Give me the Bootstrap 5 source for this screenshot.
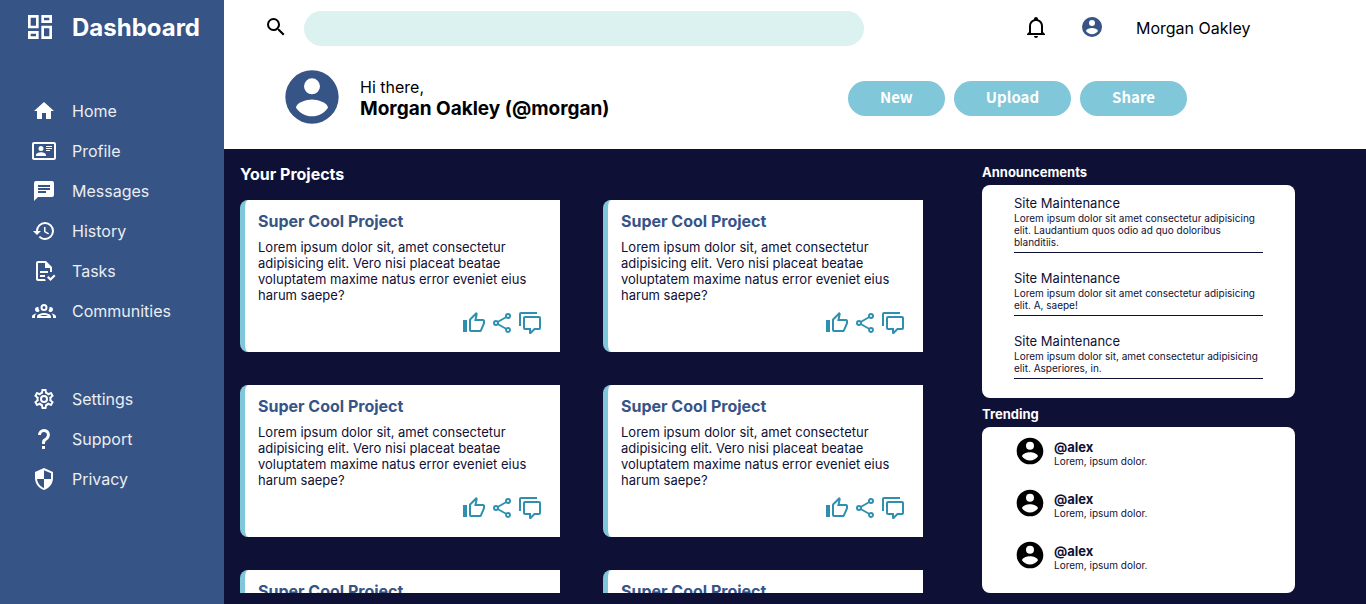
<!DOCTYPE html>
<html lang="en">
<head>
<meta charset="utf-8">
<meta name="viewport" content="width=device-width, initial-scale=1">
<title>Dashboard</title>
<link href="https://cdn.jsdelivr.net/npm/bootstrap@5.3.0/dist/css/bootstrap.min.css" rel="stylesheet">
<style>
:root { --ink:#0f1035; --blue:#365486; --sky:#7fc7d9; --mint:#dcf2f1; --teal:#2e8fae; }
body { font-family: Inter, "Liberation Sans", sans-serif; font-size:16px; line-height:20px; color:#000; background:var(--ink); }
h1,h2,h3,p,ul { margin:0; }
svg { fill:currentColor; display:block; flex:none; }
.i24 { width:24px; height:24px; }
.i32 { width:32px; height:32px; }
.i64 { width:64px; height:64px; }
.sidebar { flex:0 0 224px; background:var(--blue); color:#fff; }
.brand { gap:16px; padding:10px 0 55px 24px; }
.brand h1 { font-size:24px; font-weight:700; line-height:32px; padding-top:2px; }
.side-nav { gap:16px; padding-left:32px; }
.side-nav a { display:flex; gap:16px; height:24px; align-items:center; color:#fff; text-decoration:none; }
.side-nav span { opacity:.9; }
.topbar { padding:11px 0 0 40px; }
.search-box { flex:0 1 560px; height:35px; margin-left:16px; border:0; border-radius:18px; background:var(--mint); padding:0 16px; }
.account { width:342px; gap:32px; line-height:26px; }
.welcome { padding:19px 179px 20px 56px; }
.greeting { padding-top:4px; }
.actions { padding-top:2px; gap:9px; }
.avatar { color:var(--blue); }
.full-name { font-size:19px; font-weight:700; line-height:24px; }
.pill-btn { height:35px; border:0; border-radius:18px; padding:0 32px 2px; background:var(--sky); color:#fff; font-family:"Noto Sans CJK SC", sans-serif; font-size:15px; font-weight:700; }
.board { padding:15px 71px 11px 16px; gap:16px; color:var(--ink); }
.section-title { font-size:16px; font-weight:700; line-height:20px; color:#fff; }
.project-grid { display:grid; grid-template-columns:1fr 1fr; row-gap:33px; margin-top:16px; }
.project { max-width:320px; background:#fff; border-left:5px solid var(--sky); border-radius:8px 0 0 8px; padding:11px 18px 17px 13px; }
.project h3 { font-size:16px; font-weight:700; line-height:20px; color:var(--blue); }
.project p { font-size:13px; line-height:16px; margin:8px 0; }
.icon-btn { border:0; background:none; padding:0; color:var(--teal); }
.side-info { flex:0 0 313px; }
.side-info h2 { font-size:13px; font-weight:700; line-height:17px; color:#fff; }
.panel { background:#fff; border-radius:8px; padding:8px 32px 2px; }
.notice { border-bottom:1px solid var(--ink); padding:2px 0 4px; margin-bottom:15px; }
.notice h3, .trend h3 { font-size:13px; line-height:17px; font-weight:400; }
.notice p, .trend p { font-size:10px; line-height:12px; }
.trend { gap:8px; height:52px; }
.trend h3 { font-weight:700; line-height:16px; }
</style>
</head>
<body>
<svg class="d-none" xmlns="http://www.w3.org/2000/svg">
<symbol id="user" viewBox="0 0 24 24"><path d="M12,19.2C9.5,19.2 7.29,17.92 6,16C6.03,14 10,12.9 12,12.9C14,12.9 17.97,14 18,16C16.71,17.92 14.5,19.2 12,19.2M12,5A3,3 0 0,1 15,8A3,3 0 0,1 12,11A3,3 0 0,1 9,8A3,3 0 0,1 12,5M12,2A10,10 0 0,0 2,12A10,10 0 0,0 12,22A10,10 0 0,0 22,12C22,6.47 17.5,2 12,2Z"/></symbol>
<symbol id="like" viewBox="0 0 24 24"><path d="M5,9V21H1V9H5M9,21A2,2 0 0,1 7,19V9C7,8.45 7.22,7.95 7.59,7.59L14.17,1L15.23,2.06C15.5,2.33 15.67,2.7 15.67,3.11L15.64,3.43L14.69,8H21C22.11,8 23,8.9 23,10V12C23,12.26 22.95,12.5 22.86,12.73L19.84,19.78C19.54,20.5 18.83,21 18,21H9M9,19H18.03L21,12V10H12.21L13.34,4.68L9,9.03V19Z"/></symbol>
<symbol id="share" viewBox="0 0 24 24"><path d="M18,16.08C17.24,16.08 16.56,16.38 16.04,16.85L8.91,12.7C8.96,12.47 9,12.24 9,12C9,11.76 8.96,11.53 8.91,11.3L15.96,7.19C16.5,7.69 17.21,8 18,8A3,3 0 0,0 21,5A3,3 0 0,0 18,2A3,3 0 0,0 15,5C15,5.24 15.04,5.47 15.09,5.7L8.04,9.81C7.5,9.31 6.79,9 6,9A3,3 0 0,0 3,12A3,3 0 0,0 6,15C6.79,15 7.5,14.69 8.04,14.19L15.16,18.34C15.11,18.55 15.08,18.77 15.08,19C15.08,20.61 16.39,21.91 18,21.91C19.61,21.91 20.92,20.61 20.92,19A2.92,2.92 0 0,0 18,16.08M18,4A1,1 0 0,1 19,5A1,1 0 0,1 18,6A1,1 0 0,1 17,5A1,1 0 0,1 18,4M6,13A1,1 0 0,1 5,12A1,1 0 0,1 6,11A1,1 0 0,1 7,12A1,1 0 0,1 6,13M18,20A1,1 0 0,1 17,19A1,1 0 0,1 18,18A1,1 0 0,1 19,19A1,1 0 0,1 18,20Z"/></symbol>
<symbol id="comments" viewBox="0 0 24 24"><path d="M12,23A1,1 0 0,1 11,22V19H7A2,2 0 0,1 5,17V7A2,2 0 0,1 7,5H21A2,2 0 0,1 23,7V17A2,2 0 0,1 21,19H16.9L13.2,22.71C13,22.89 12.76,23 12.5,23H12M13,17V20.08L16.08,17H21V7H7V17H13M3,15H1V3A2,2 0 0,1 3,1H19V3H3V15Z"/></symbol>
</svg>
<div class="d-flex vh-100 overflow-hidden">
<aside class="sidebar">
  <div class="brand d-flex align-items-center">
    <svg class="i32" viewBox="0 0 24 24"><path d="M19,5V7H15V5H19M9,5V11H5V5H9M19,13V19H15V13H19M9,17V19H5V17H9M21,3H13V9H21V3M11,3H3V13H11V3M21,11H13V21H21V11M11,15H3V21H11V15Z"/></svg>
    <h1>Dashboard</h1>
  </div>
  <nav class="side-nav d-flex flex-column" aria-label="Main">
    <a href="#"><svg class="i24" viewBox="0 0 24 24"><path d="M10,20V14H14V20H19V12H22L12,3L2,12H5V20H10Z"/></svg><span>Home</span></a>
    <a href="#"><svg class="i24" viewBox="0 0 24 24"><path d="M22,3H2C0.91,3.04 0.04,3.91 0,5V19C0.04,20.09 0.91,20.96 2,21H22C23.09,20.96 23.96,20.09 24,19V5C23.96,3.91 23.09,3.04 22,3M22,19H2V5H22V19M14,17V15.75C14,14.09 10.66,13.25 9,13.25C7.34,13.25 4,14.09 4,15.75V17H14M9,7A2.5,2.5 0 0,0 6.5,9.5A2.5,2.5 0 0,0 9,12A2.5,2.5 0 0,0 11.5,9.5A2.5,2.5 0 0,0 9,7M14,7V8H20V7H14M14,9V10H20V9H14M14,11V12H18V11H14"/></svg><span>Profile</span></a>
    <a href="#"><svg class="i24" viewBox="0 0 24 24"><path d="M20,2H4A2,2 0 0,0 2,4V22L6,18H20A2,2 0 0,0 22,16V4A2,2 0 0,0 20,2M6,9H18V11H6M14,14H6V12H14M18,8H6V6H18"/></svg><span>Messages</span></a>
    <a href="#"><svg class="i24" viewBox="0 0 24 24"><path d="M13.5,8H12V13L16.28,15.54L17,14.33L13.5,12.25V8M13,3A9,9 0 0,0 4,12H1L4.96,16.03L9,12H6A7,7 0 0,1 13,5A7,7 0 0,1 20,12A7,7 0 0,1 13,19C11.07,19 9.32,18.21 8.06,16.94L6.64,18.36C8.27,20 10.5,21 13,21A9,9 0 0,0 22,12A9,9 0 0,0 13,3"/></svg><span>History</span></a>
    <a href="#"><svg class="i24" viewBox="0 0 24 24"><path d="M23.5,17L18.5,22L15,18.5L16.5,17L18.5,19L22,15.5L23.5,17M6,2C4.89,2 4,2.9 4,4V20C4,21.11 4.89,22 6,22H13.81C13.45,21.38 13.2,20.7 13.08,20H6V4H13V9H18V13.08C18.33,13.03 18.67,13 19,13C19.34,13 19.67,13.03 20,13.08V8L14,2M8,12V14H16V12M8,16V18H13V16Z"/></svg><span>Tasks</span></a>
    <a href="#"><svg class="i24" viewBox="0 0 24 24"><path d="M12,5A3.5,3.5 0 0,0 8.5,8.5A3.5,3.5 0 0,0 12,12A3.5,3.5 0 0,0 15.5,8.5A3.5,3.5 0 0,0 12,5M12,7A1.5,1.5 0 0,1 13.5,8.5A1.5,1.5 0 0,1 12,10A1.5,1.5 0 0,1 10.5,8.5A1.5,1.5 0 0,1 12,7M5.5,8A2.5,2.5 0 0,0 3,10.5C3,11.44 3.53,12.25 4.29,12.68C4.65,12.88 5.06,13 5.5,13C5.94,13 6.35,12.88 6.71,12.68C7.08,12.47 7.39,12.17 7.62,11.81C6.89,10.86 6.5,9.7 6.5,8.5C6.5,8.41 6.5,8.31 6.5,8.22C6.2,8.08 5.86,8 5.5,8M18.5,8C18.14,8 17.8,8.08 17.5,8.22C17.5,8.31 17.5,8.41 17.5,8.5C17.5,9.7 17.11,10.86 16.38,11.81C16.5,12 16.63,12.15 16.78,12.3C16.94,12.45 17.1,12.58 17.29,12.68C17.65,12.88 18.06,13 18.5,13C18.94,13 19.35,12.88 19.71,12.68C20.47,12.25 21,11.44 21,10.5A2.5,2.5 0 0,0 18.5,8M12,14C9.66,14 5,15.17 5,17.5V19H19V17.5C19,15.17 14.34,14 12,14M4.71,14.55C2.78,14.78 0,15.76 0,17.5V19H3V17.07C3,16.06 3.69,15.22 4.71,14.55M19.29,14.55C20.31,15.22 21,16.06 21,17.07V19H24V17.5C24,15.76 21.22,14.78 19.29,14.55M12,16C13.53,16 15.24,16.5 16.23,17H7.77C8.76,16.5 10.47,16 12,16Z"/></svg><span>Communities</span></a>
  </nav>
  <nav class="side-nav d-flex flex-column mt-5 pt-3" aria-label="Preferences">
    <a href="#"><svg class="i24" viewBox="0 0 24 24"><path d="M12,8A4,4 0 0,1 16,12A4,4 0 0,1 12,16A4,4 0 0,1 8,12A4,4 0 0,1 12,8M12,10A2,2 0 0,0 10,12A2,2 0 0,0 12,14A2,2 0 0,0 14,12A2,2 0 0,0 12,10M10,22C9.75,22 9.54,21.82 9.5,21.58L9.13,18.93C8.5,18.68 7.96,18.34 7.44,17.94L4.95,18.95C4.73,19.03 4.46,18.95 4.34,18.73L2.34,15.27C2.21,15.05 2.27,14.78 2.46,14.63L4.57,12.97L4.5,12L4.57,11L2.46,9.37C2.27,9.22 2.21,8.95 2.34,8.73L4.34,5.27C4.46,5.05 4.73,4.96 4.95,5.05L7.44,6.05C7.96,5.66 8.5,5.32 9.13,5.07L9.5,2.42C9.54,2.18 9.75,2 10,2H14C14.25,2 14.46,2.18 14.5,2.42L14.87,5.07C15.5,5.32 16.04,5.66 16.56,6.05L19.05,5.05C19.27,4.96 19.54,5.05 19.66,5.27L21.66,8.73C21.79,8.95 21.73,9.22 21.54,9.37L19.43,11L19.5,12L19.43,13L21.54,14.63C21.73,14.78 21.79,15.05 21.66,15.27L19.66,18.73C19.54,18.95 19.27,19.04 19.05,18.95L16.56,17.95C16.04,18.34 15.5,18.68 14.87,18.93L14.5,21.58C14.46,21.82 14.25,22 14,22H10M11.25,4L10.88,6.61C9.68,6.86 8.62,7.5 7.85,8.39L5.44,7.35L4.69,8.65L6.8,10.2C6.4,11.37 6.4,12.64 6.8,13.8L4.68,15.36L5.43,16.66L7.86,15.62C8.63,16.5 9.68,17.14 10.87,17.38L11.24,20H12.76L13.13,17.39C14.32,17.14 15.37,16.5 16.14,15.62L18.57,16.66L19.32,15.36L17.2,13.81C17.6,12.64 17.6,11.37 17.2,10.2L19.31,8.65L18.56,7.35L16.15,8.39C15.38,7.5 14.32,6.86 13.12,6.62L12.75,4H11.25Z"/></svg><span>Settings</span></a>
    <a href="#"><svg class="i24" viewBox="0 0 24 24"><path d="M10,19H13V22H10V19M12,2C17.35,2.22 19.68,7.62 16.5,11.67C15.67,12.67 14.33,13.33 13.67,14.17C13,15 13,16 13,17H10C10,15.33 10,13.92 10.67,12.92C11.33,11.92 12.67,11.33 13.5,10.67C15.92,8.43 15.32,5.26 12,5A3,3 0 0,0 9,8H6A6,6 0 0,1 12,2Z"/></svg><span>Support</span></a>
    <a href="#"><svg class="i24" viewBox="0 0 24 24"><path fill-rule="evenodd" d="M12,1L3,5V11C3,16.55 6.84,21.73 12,23C17.16,21.73 21,16.55 21,11V5L12,1M12,3.19V12H19V6.3L12,3.19M12,12H5C5.53,16.11 8.28,19.78 12,20.92V12Z"/></svg><span>Privacy</span></a>
  </nav>
</aside>
<div class="d-flex flex-column flex-grow-1">
  <header class="bg-white">
    <div class="topbar d-flex justify-content-between">
      <form class="d-flex flex-grow-1" role="search">
        <label for="q" class="pt-1"><svg class="i24" role="img" aria-label="Search" viewBox="0 0 24 24"><path d="M9.5,3A6.5,6.5 0 0,1 16,9.5C16,11.11 15.41,12.59 14.44,13.73L14.71,14H15.5L20.5,19L19,20.5L14,15.5V14.71L13.73,14.44C12.59,15.41 11.11,16 9.5,16A6.5,6.5 0 0,1 3,9.5A6.5,6.5 0 0,1 9.5,3M9.5,5C7,5 5,7 5,9.5C5,12 7,14 9.5,14C12,14 14,12 14,9.5C14,7 12,5 9.5,5Z"/></svg></label>
        <input id="q" class="search-box" type="search">
      </form>
      <div class="account d-flex pt-1">
        <button class="icon-btn text-black i24" type="button" aria-label="Notifications"><svg class="i24" viewBox="0 0 24 24"><path d="M10,21H14C14,22.1 13.1,23 12,23S10,22.1 10,21M21,19V20H3V19L5,17V11C5,7.9 7,5.2 10,4.3V4C10,2.9 10.9,2 12,2S14,2.9 14,4V4.3C17,5.2 19,7.9 19,11V17L21,19M17,11C17,8.2 14.8,6 12,6S7,8.2 7,11V18H17V11Z"/></svg></button>
        <svg class="i24 avatar"><use href="#user"/></svg>
        <span>Morgan Oakley</span>
      </div>
    </div>
    <div class="welcome d-flex align-items-center justify-content-between">
      <div class="d-flex align-items-center gap-3">
        <svg class="i64 avatar"><use href="#user"/></svg>
        <div class="greeting">Hi there,<div class="full-name">Morgan Oakley (@morgan)</div></div>
      </div>
      <div class="actions d-flex">
        <button class="pill-btn" type="button">New</button>
        <button class="pill-btn" type="button">Upload</button>
        <button class="pill-btn" type="button">Share</button>
      </div>
    </div>
  </header>
  <main class="board d-flex flex-grow-1 overflow-hidden">
    <section class="flex-grow-1 overflow-hidden">
      <h2 class="section-title">Your Projects</h2>
      <div class="project-grid" id="projects">
        <article class="project">
          <h3>Super Cool Project</h3>
          <p>Lorem ipsum dolor sit, amet consectetur adipisicing elit. Vero nisi placeat beatae voluptatem maxime natus error eveniet eius harum saepe?</p>
          <div class="d-flex justify-content-end gap-1">
            <button class="icon-btn" type="button" aria-label="Like"><svg class="i24"><use href="#like"/></svg></button>
            <button class="icon-btn" type="button" aria-label="Share"><svg class="i24"><use href="#share"/></svg></button>
            <button class="icon-btn" type="button" aria-label="Comments"><svg class="i24"><use href="#comments"/></svg></button>
          </div>
        </article>
      </div>
    </section>
    <aside class="side-info">
      <h2>Announcements</h2>
      <div class="panel mt-1 mb-2 pb-1">
        <div class="notice"><h3>Site Maintenance</h3><p>Lorem ipsum dolor sit amet consectetur adipisicing elit. Laudantium quos odio ad quo doloribus blanditiis.</p></div>
        <div class="notice"><h3>Site Maintenance</h3><p>Lorem ipsum dolor sit amet consectetur adipisicing elit. A, saepe!</p></div>
        <div class="notice"><h3>Site Maintenance</h3><p>Lorem ipsum dolor sit, amet consectetur adipisicing elit. Asperiores, in.</p></div>
      </div>
      <h2>Trending</h2>
      <div class="panel mt-1">
        <div class="trend d-flex"><svg class="i32 text-black"><use href="#user"/></svg><div class="pt-1"><h3>@alex</h3><p>Lorem, ipsum dolor.</p></div></div>
        <div class="trend d-flex"><svg class="i32 text-black"><use href="#user"/></svg><div class="pt-1"><h3>@alex</h3><p>Lorem, ipsum dolor.</p></div></div>
        <div class="trend d-flex"><svg class="i32 text-black"><use href="#user"/></svg><div class="pt-1"><h3>@alex</h3><p>Lorem, ipsum dolor.</p></div></div>
      </div>
    </aside>
  </main>
</div>
</div>
<script src="https://cdn.jsdelivr.net/npm/bootstrap@5.3.0/dist/js/bootstrap.bundle.min.js"></script>
<script>
const grid = document.getElementById('projects');
const first = grid.firstElementChild;
for (let i = 1; i < 6; i++) grid.append(first.cloneNode(true));
</script>
</body>
</html>
